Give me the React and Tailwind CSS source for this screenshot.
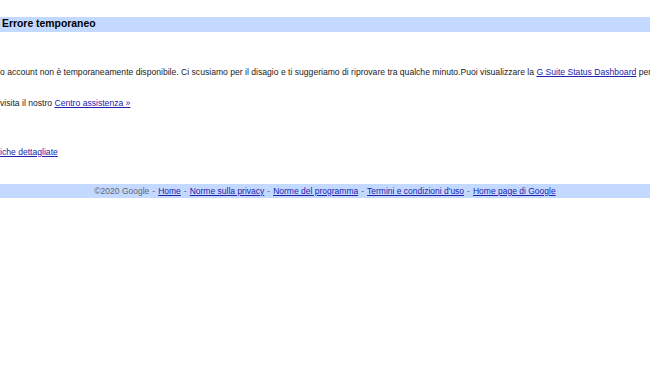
import React from 'react';

const font = { fontFamily: '"Liberation Sans", Arial, sans-serif' };

const Link = ({ children }) => (
  <a href="#" className="text-[#2222aa] underline">
    {children}
  </a>
);

const FooterSep = () => <span className="mx-[3px]">-</span>;

export default function App() {
  return (
    <div className="w-[650px] h-[390px] overflow-hidden bg-white text-[#222]" style={font}>
      <div className="h-[17px]" />
      <div className="h-[15px] bg-[#c3d9ff] pl-[2px] flex items-center">
        <h1 className="text-[10.4px] font-bold text-black leading-none">Errore temporaneo</h1>
      </div>

      <div className="text-[8.6px] leading-[12px] whitespace-nowrap">
        <p className="mt-[34px]">
          o account non è temporaneamente disponibile. Ci scusiamo per il disagio e ti suggeriamo di riprovare tra
          qualche minuto.Puoi visualizzare la <Link>G Suite Status Dashboard</Link> per ulteriori informazioni.
        </p>
        <p className="mt-[19px]">
          visita il nostro <Link>Centro assistenza »</Link>
        </p>
        <p className="mt-[37px]">
          <Link>iche dettagliate</Link>
        </p>
      </div>

      <div className="mt-[26px] h-[14px] bg-[#c3d9ff] flex items-center justify-center text-[8.5px] text-[#666] whitespace-nowrap">
        ©2020 Google
        <FooterSep />
        <Link>Home</Link>
        <FooterSep />
        <Link>Norme sulla privacy</Link>
        <FooterSep />
        <Link>Norme del programma</Link>
        <FooterSep />
        <Link>Termini e condizioni d'uso</Link>
        <FooterSep />
        <Link>Home page di Google</Link>
      </div>
    </div>
  );
}
